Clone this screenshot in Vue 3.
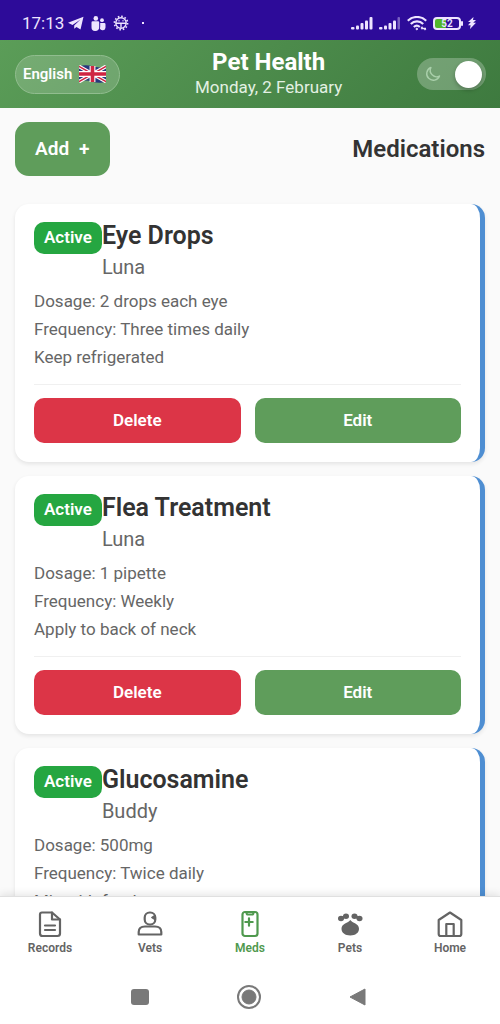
<script setup>
import { ref } from 'vue'

const dayMode = ref(true)

const medications = [
  { name: 'Eye Drops', pet: 'Luna', dosage: '2 drops each eye', frequency: 'Three times daily', note: 'Keep refrigerated' },
  { name: 'Flea Treatment', pet: 'Luna', dosage: '1 pipette', frequency: 'Weekly', note: 'Apply to back of neck' },
  { name: 'Glucosamine', pet: 'Buddy', dosage: '500mg', frequency: 'Twice daily', note: 'Mix with food' }
]

const tabs = [
  { id: 'records', label: 'Records' },
  { id: 'vets', label: 'Vets' },
  { id: 'meds', label: 'Meds' },
  { id: 'pets', label: 'Pets' },
  { id: 'home', label: 'Home' }
]
const current = ref('meds')
</script>

<template>
  <div class="screen">
    <div class="status">
      <div class="status-left">
        <span class="clock">17:13</span>
        <svg width="16" height="14" viewBox="0 0 16 14" fill="#eee4ff"><path d="M15.500 .8 0 6.800l4.500 2.100L12.500 3.600 6.200 9.600v3.200l2.300-1.800 4 2.400z" /></svg>
        <svg width="15" height="15" viewBox="0 0 15 15" fill="#eee4ff">
          <circle cx="4.8" cy="2.4" r="2.3" /><circle cx="11" cy="4.2" r="1.9" />
          <path d="M.5 6.5Q.5 5.3 1.7 5.3H7q1.2 0 1.2 1.2v5A3.8 3.8 0 0 1 4.4 15 3.8 3.8 0 0 1 .5 11.2zM9.2 7h4.1q1.2 0 1.2 1.2v3.2a3 3 0 0 1-5.7 1.2q.4-.8.4-2z" />
        </svg>
        <svg width="16" height="16" viewBox="0 0 16 16" fill="none" stroke="#eee4ff">
          <circle cx="8" cy="8" r="6.600" stroke-width="1.6" stroke-dasharray="1.6 1.855" />
          <circle cx="8" cy="8" r="5.2" stroke-width="1.400" />
          <path d="M3 8.3h10M8 8.3v4.5M5.5 5.8h1M9.5 5.8h1" stroke-width="1.4" />
        </svg>
        <span class="dot"></span>
      </div>
      <div class="status-right">
        <svg width="22" height="13" viewBox="0 0 22 13" fill="#eee4ff">
          <rect y="10" width="3.500" height="2.5" rx="1" /><rect x="5" y="8.5" width="3" height="4" rx="1" /><rect x="9.5" y="6" width="3" height="6.5" rx="1" /><rect x="14" y="3.5" width="3" height="9" rx="1" /><rect x="18.5" y="0" width="3" height="12.5" rx="1" />
        </svg>
        <svg width="22" height="13" viewBox="0 0 22 13" fill="#eee4ff">
          <rect y="10" width="3.500" height="2.5" rx="1" /><rect x="5" y="8.5" width="3" height="4" rx="1" /><rect x="9.5" y="6" width="3" height="6.5" rx="1" /><rect x="14" y="3.5" width="3" height="9" rx="1" /><rect x="18.5" y="0" width="2.5" height="12.5" rx="1" opacity=".4" />
        </svg>
        <svg width="20" height="15" viewBox="0 0 20 15" fill="none" stroke="#eee4ff" stroke-width="2.200">
          <path d="M.8 4.8a13 13 0 0 1 18.4 0M3.8 8a8.8 8.8 0 0 1 12.4 0M6.8 11a4.6 4.6 0 0 1 6 0" />
          <circle cx="9.8" cy="13" r=".8" fill="#eee4ff" stroke-width="1" />
          <path d="M14 12.5h5M15.5 10.8 14 12.5M17.5 14l1.5-1.5" stroke-width="1.3" />
        </svg>
        <div class="battery"><span>52</span></div>
        <svg width="8" height="12" viewBox="0 0 8 12" fill="#eee4ff"><path d="M5.5 0 0 5h2.8L0 8.2h2.6L2 12l6-6.3H5.2L8 3H5z" /></svg>
      </div>
    </div>

    <header class="header">
      <button class="language" type="button">
        English
        <svg width="27" height="18" viewBox="0 0 60 40">
          <path d="M0 3q15-5 30 0t30 0v34q-15 5-30 0T0 37z" fill="#27367c" />
          <path d="M0 3l60 34M60 3L0 37" stroke="#fff" stroke-width="8" />
          <path d="M0 3l60 34M60 3L0 37" stroke="#cf2442" stroke-width="3" />
          <path d="M30 2v36M0 20h60" stroke="#fff" stroke-width="13" />
          <path d="M30 2v36M0 20h60" stroke="#cf2442" stroke-width="8" />
        </svg>
      </button>
      <div class="heading">
        <h1>Pet Health</h1>
        <p>Monday, 2 February</p>
      </div>
      <label class="toggle">
        <input v-model="dayMode" type="checkbox" aria-label="Light mode" />
        <svg width="16" height="16" viewBox="0 0 16 16" fill="none" stroke="#a9cfaa" stroke-width="1.4" stroke-linejoin="round"><path d="M6 1.5A6.6 6.6 0 1 0 14.5 10 6.3 6.3 0 0 1 6 1.5z" /></svg>
        <span class="knob"></span>
      </label>
    </header>

    <main class="content">
      <div class="toolbar">
        <button class="add" type="button"><span>Add</span><span>+</span></button>
        <h2>Medications</h2>
      </div>
      <article v-for="med in medications" :key="med.name" class="card">
        <div class="card-top">
          <span class="badge">Active</span>
          <div>
            <h3>{{ med.name }}</h3>
            <p class="pet">{{ med.pet }}</p>
          </div>
        </div>
        <div class="details">
          <p>Dosage: {{ med.dosage }}</p>
          <p>Frequency: {{ med.frequency }}</p>
          <p>{{ med.note }}</p>
        </div>
        <div class="actions">
          <button class="delete" type="button">Delete</button>
          <button class="edit" type="button">Edit</button>
        </div>
      </article>
    </main>

    <nav class="tabs">
      <a v-for="tab in tabs" :key="tab.id" href="#" :class="{ active: current === tab.id }" @click.prevent="current = tab.id">
        <svg width="28" height="28" viewBox="0 0 28 28" fill="none" stroke="currentColor" stroke-width="2.2" stroke-linejoin="round" stroke-linecap="round">
          <template v-if="tab.id === 'records'">
            <path d="M6 2.500h10l8 7v14q0 2.500-2.500 2.500h-15Q4 26 4 23.500V4.500Q4 2.500 6 2.500z" />
            <path d="M16 2.500v7h8M9 15.500h10M9 20h10" />
          </template>
          <template v-else-if="tab.id === 'vets'">
            <rect x="8.700" y="2.500" width="10.600" height="12" rx="5" />
            <path d="M18.700 5.500l-3 2 3 2z" stroke-width="1.200" fill="currentColor" />
            <path d="M2.700 24.500v-2.500q0-5.500 6.300-5.500h10q6.300 0 6.300 5.500v2.500z" />
          </template>
          <template v-else-if="tab.id === 'meds'">
            <rect x="6.500" y="2" width="15" height="24" rx="2.500" />
            <path d="M10.500 2.500q0 2 1.500 2h4q1.500 0 1.500-2M13 8.300v7.400M9.300 12h7.400" />
          </template>
          <template v-else-if="tab.id === 'pets'">
            <g fill="currentColor" stroke="none">
              <ellipse cx="5" cy="8.500" rx="3" ry="2.700" /><ellipse cx="10" cy="6.200" rx="3" ry="2.700" />
              <ellipse cx="18.500" cy="6.200" rx="3" ry="2.700" /><ellipse cx="23.500" cy="8.500" rx="3" ry="2.700" />
              <path d="M5 7l5-2.500v3L5 10zM18.500 4.500l5 2.500v3l-5-2.500z" />
              <path d="M14.300 10c2 3 8.700 3.600 8.700 8.700 0 4-3.500 6.700-8.700 6.700s-8.800-2.700-8.800-6.700c0-5.100 6.800-5.700 8.800-8.700z" />
            </g>
          </template>
          <template v-else>
            <path d="M2.700 10 14 2.500 25.300 10v14q0 2-2 2H4.700q-2 0-2-2zM10.300 26V14h7.400v12" />
          </template>
        </svg>
        <span>{{ tab.label }}</span>
      </a>
    </nav>

    <div class="system">
      <button type="button" aria-label="Recent apps"><svg width="18" height="16"><rect width="18" height="16" rx="3" fill="#797979" /></svg></button>
      <button type="button" aria-label="Home screen"><svg width="24" height="24" fill="none" stroke="#797979"><circle cx="12" cy="12" r="11" stroke-width="2" /><circle cx="12" cy="12" r="7" fill="#797979" /></svg></button>
      <button type="button" aria-label="Back"><svg width="17" height="18"><path d="M1 9 16 1v16z" fill="#797979" stroke="#797979" stroke-linejoin="round" /></svg></button>
    </div>
  </div>
</template>

<style>
body { margin: 0; }
</style>

<style scoped>
* { box-sizing: border-box; }
.screen { height: 100vh; display: flex; flex-direction: column; overflow: hidden; background: #fafafa; color: #333; font-family: Roboto, "Liberation Sans", sans-serif; }
h1, h2, h3, p { margin: 0; }
button { border: 0; padding: 0; font: inherit; color: inherit; background: none; cursor: pointer; }
svg { display: block; flex: none; }
.status { flex: none; height: 40px; padding: 6px 24px 0 22px; display: flex; align-items: center; justify-content: space-between; background: #2d0b99; color: #eee4ff; }
.status-left { display: flex; align-items: center; gap: 7px; }
.clock { font-size: 17px; line-height: 20px; margin-right: -3px; }
.dot { width: 2px; height: 2px; margin-left: 6px; background: #eee4ff; }
.status-right { display: flex; align-items: center; gap: 6px; }
.battery { position: relative; width: 28px; height: 13px; margin-right: 1px; border: 2px solid #eee4ff; border-radius: 4px; background: linear-gradient(90deg, #51b62c 48%, transparent 48%); background-origin: border-box; font-size: 10px; line-height: 9px; font-weight: 600; text-align: center; }
.battery::after { content: ""; position: absolute; right: -4px; top: 2px; width: 2px; height: 5px; border-radius: 1px; background: #eee4ff; }
.header { flex: none; height: 68px; padding: 0 14px 0 15px; display: flex; align-items: center; justify-content: space-between; background: linear-gradient(135deg, #5b9d58, #3e7a3f); color: #fff; }
.language { display: flex; align-items: center; gap: 7px; height: 39px; padding: 0 13px 0 7px; border: 1px solid #91bd8f; border-radius: 20px; background: rgba(255, 255, 255, .17); color: #fff; font-size: 15px; font-weight: 600; }
.heading { padding-bottom: 2px; text-align: center; }
h1 { font-size: 24px; line-height: 28px; font-weight: 700; }
.heading p { font-size: 17px; line-height: 22px; color: #e3f1e3; }
.toggle { position: relative; display: flex; align-items: center; justify-content: space-between; width: 69px; height: 32px; padding: 0 4px 0 8px; border-radius: 16px; background: rgba(255, 255, 255, .25); }
.toggle input { position: absolute; inset: 0; width: 100%; height: 100%; margin: 0; opacity: 0; }
.knob { width: 27px; height: 27px; border-radius: 50%; background: #fff; box-shadow: 0 2px 4px rgba(0, 0, 0, .25); }
.content { flex: 1; min-height: 0; overflow-y: auto; scrollbar-width: none; padding: 14px 15px; }
.toolbar { display: flex; justify-content: space-between; align-items: center; margin-bottom: 28px; }
.add { display: flex; gap: 10px; padding: 15px 20px; border-radius: 14px; background: #5f9d5b; color: #fff; font-size: 19px; line-height: 24px; font-weight: 600; }
h2 { font-size: 24px; line-height: 30px; font-weight: 600; }
.card { margin-bottom: 14px; padding: 18px 19px; border-right: 5px solid #4e8ed2; border-radius: 14px; background: #fff; box-shadow: 0 2px 4px rgba(0, 0, 0, .09); }
.card-top { display: flex; align-items: flex-start; margin-bottom: 7px; }
.badge { padding: 5px 10px 7px; border-radius: 10px; background: #25a641; color: #fff; font-size: 17px; line-height: 20px; font-weight: 600; }
h3 { font-size: 25px; line-height: 28px; font-weight: 600; }
.pet { margin-top: 4px; font-size: 20px; line-height: 26px; color: #666; }
.details p { font-size: 17px; line-height: 28px; color: #666; }
.actions { display: flex; gap: 14px; margin-top: 13px; padding: 13px 0 1px; border-top: 1px solid #f0f0f0; }
.actions button { flex: 1; height: 45px; padding-bottom: 2px; border-radius: 10px; color: #fff; font-size: 17px; font-weight: 600; }
.actions .delete { background: #dc3547; }
.actions .edit { background: #5f9d5b; }
.tabs { position: relative; flex: none; height: 74px; display: flex; background: #fff; border-top: 1px solid #e0e0e0; box-shadow: 0 -2px 8px rgba(0, 0, 0, .1); }
.tabs a { flex: 1; display: flex; flex-direction: column; align-items: center; gap: 2px; padding-top: 13px; color: #646464; font-size: 12px; line-height: 16px; font-weight: 600; text-decoration: none; }
.tabs .active { color: #4f994e; }
.system { position: relative; flex: none; height: 54px; padding: 0 134px 0 131px; display: flex; align-items: center; justify-content: space-between; background: #fff; }
</style>
